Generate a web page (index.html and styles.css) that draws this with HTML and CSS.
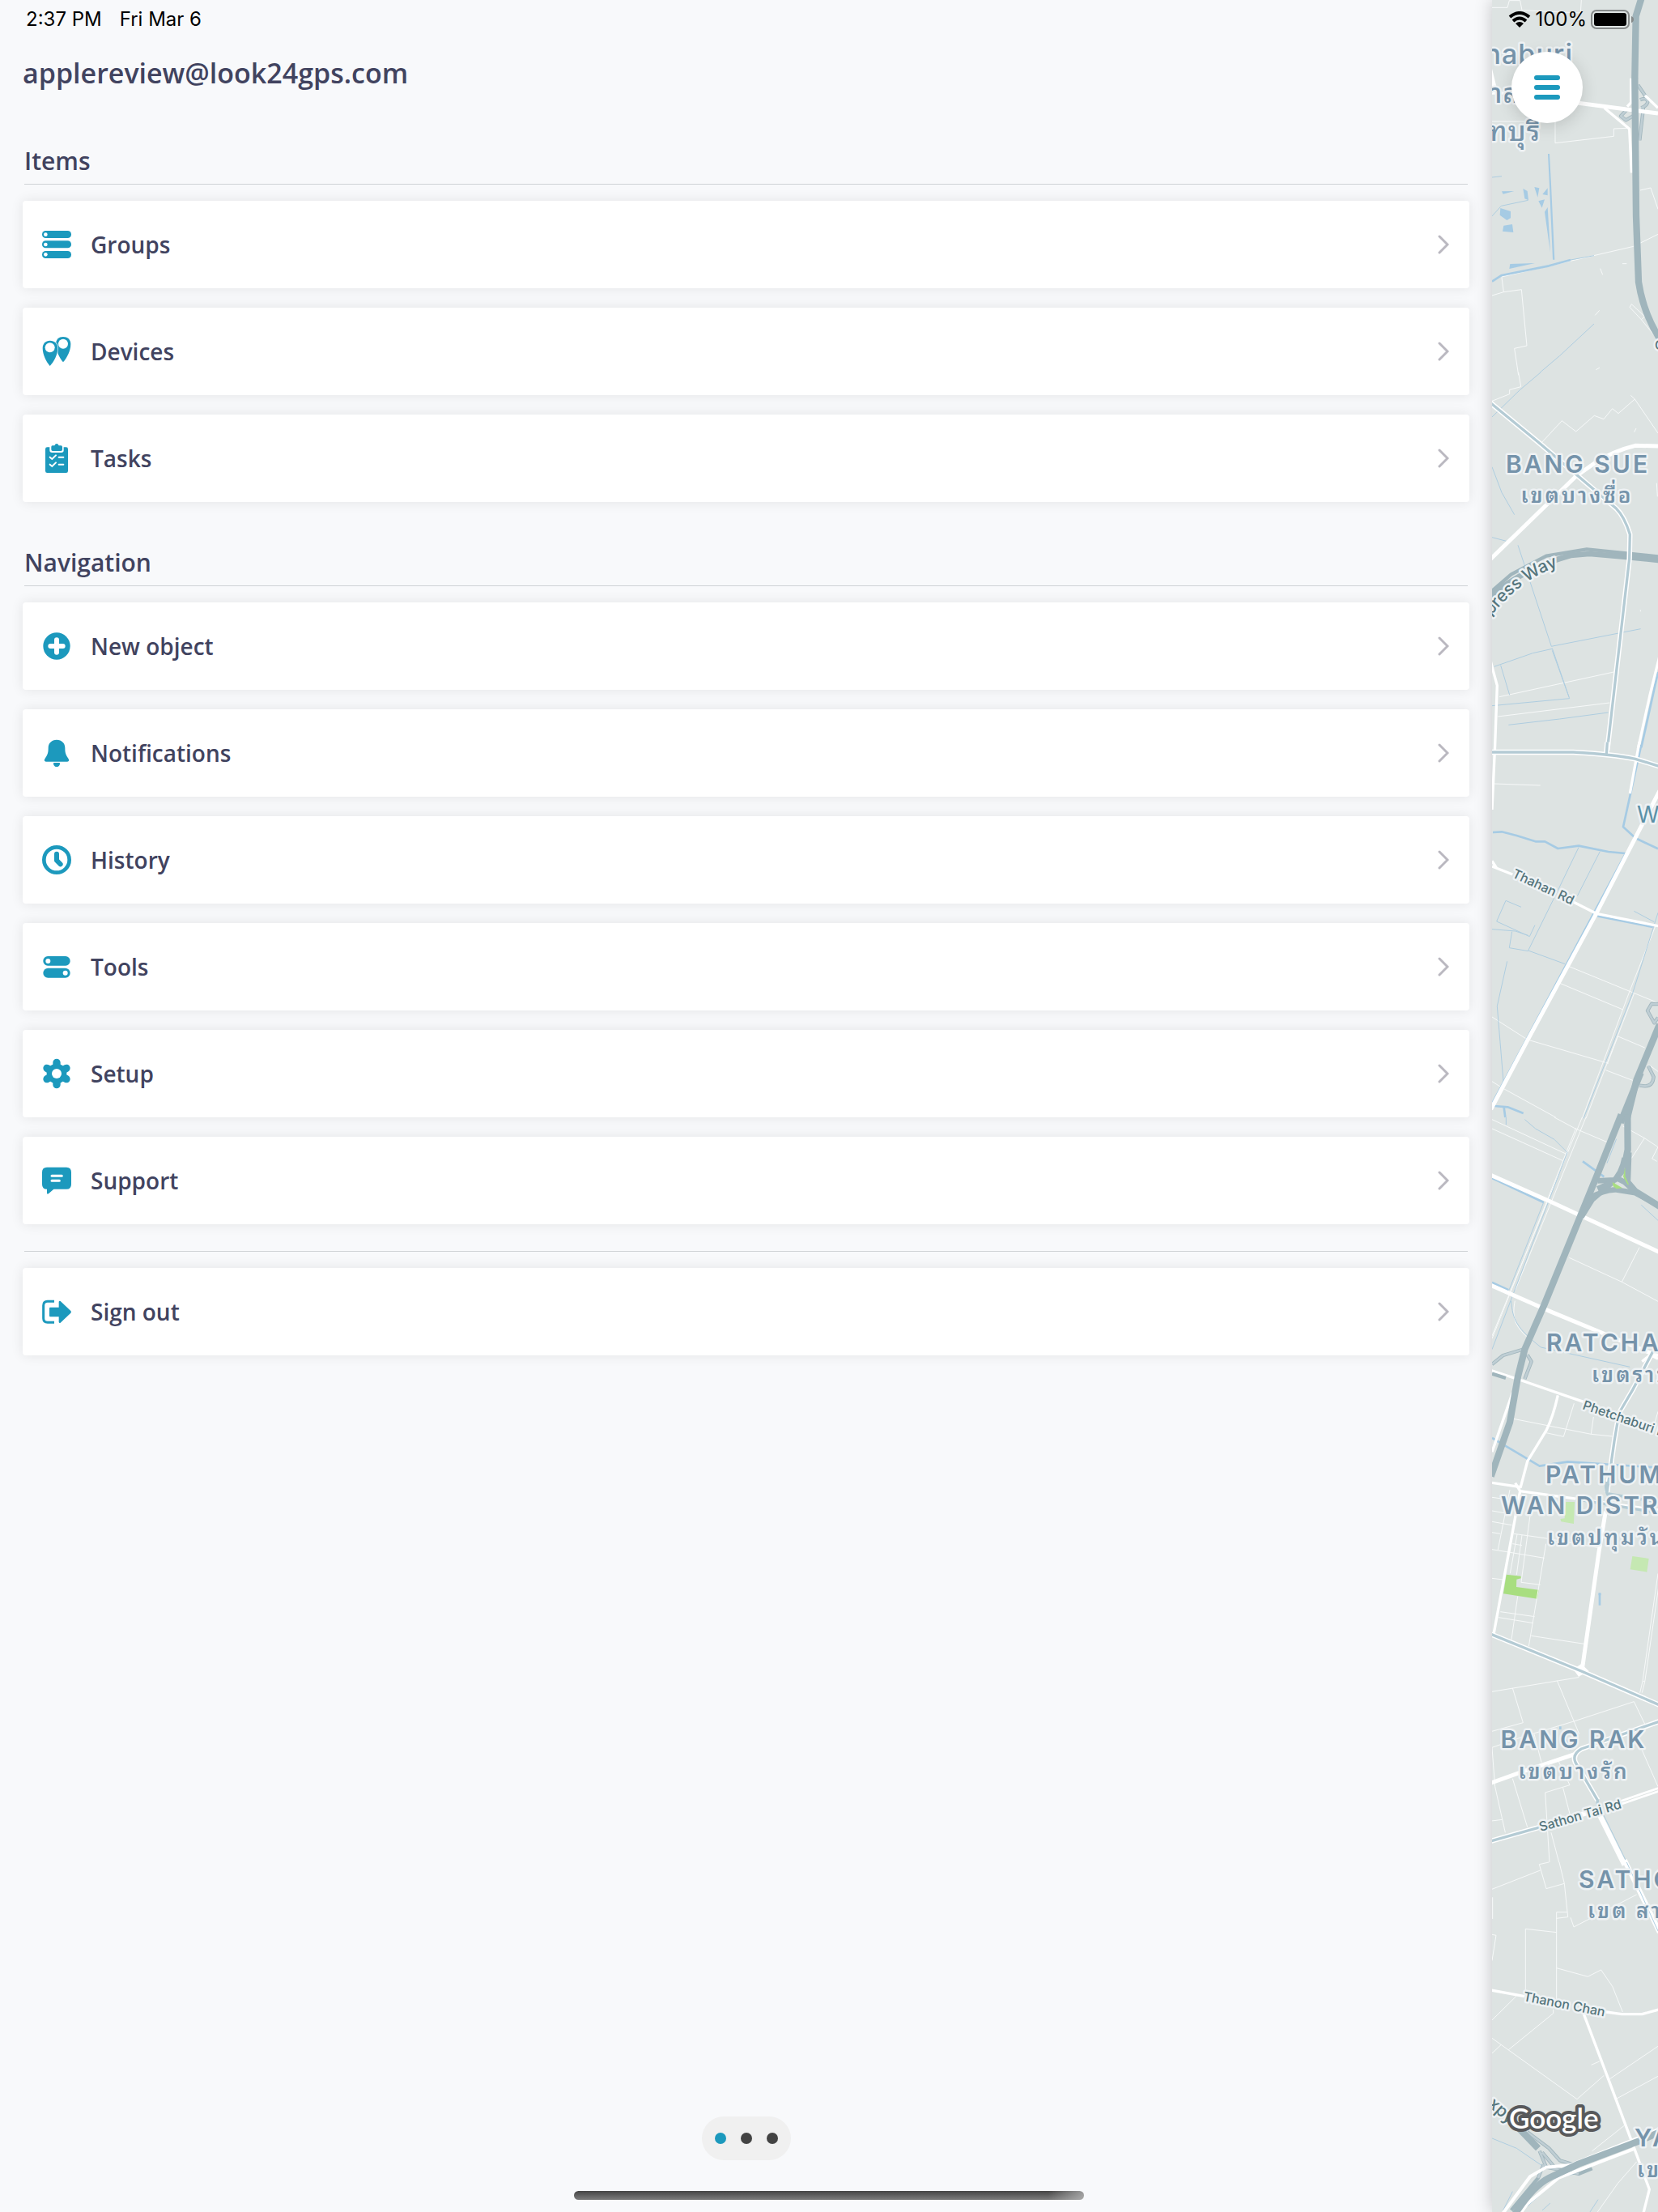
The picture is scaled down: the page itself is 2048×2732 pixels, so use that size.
FILE: index.html
```html
<!DOCTYPE html>
<html lang="en">
<head>
<meta charset="utf-8">
<meta name="viewport" content="width=device-width, initial-scale=1">
<title>Menu</title>
<link rel="stylesheet" href="styles.css">
</head>
<body>
<div class="screen">
  <main class="drawer">
    <div class="clock"><span>2:37 PM</span><span>Fri Mar 6</span></div>
    <h1 class="account">applereview@look24gps.com</h1>

    <section class="section">
      <h2 class="section-title">Items</h2>
      <nav class="list" aria-label="Items">
        <a class="row" href="#groups">
          <svg class="icon" viewBox="0 0 108 108" aria-hidden="true"><rect x="0" y="3" width="108" height="27" rx="13"/><rect x="0" y="40" width="108" height="27" rx="13"/><rect x="0" y="78" width="108" height="27" rx="13"/><g class="hole"><circle cx="13" cy="17" r="7"/><circle cx="13" cy="54" r="7"/><circle cx="13" cy="91" r="7"/></g></svg>
          <span class="label">Groups</span>
          <svg class="chevron" viewBox="0 0 14 24" aria-hidden="true"><path d="M2 2l10 10L2 22"/></svg>
        </a>
        <a class="row" href="#devices">
          <svg class="icon" viewBox="0 0 108 108" aria-hidden="true"><path d="M78 0C94 0 106 10 106 27C106 52 92 78 78 94C64 78 51 52 51 27C51 10 62 0 78 0Z"/><path class="pin-front" d="M29 14C46 14 58 25 58 42C58 66 44 92 29 108C15 92 2 66 2 42C2 25 13 14 29 14Z"/><g class="hole"><circle cx="29" cy="40" r="18"/><circle cx="78" cy="26" r="18"/></g></svg>
          <span class="label">Devices</span>
          <svg class="chevron" viewBox="0 0 14 24" aria-hidden="true"><path d="M2 2l10 10L2 22"/></svg>
        </a>
        <a class="row" href="#tasks">
          <svg class="icon" viewBox="0 0 108 108" aria-hidden="true"><path d="M19 13H28V25Q28 33 37 33H71Q80 33 80 25V13H89Q96 13 96 20V101Q96 108 89 108H19Q12 108 12 101V20Q12 13 19 13Z"/><path d="M38 7H46Q49 0 54 0Q59 0 62 7H70Q75 7 75 12V22Q75 27 70 27H39Q34 27 34 22V12Q34 7 38 7Z"/><path class="mark" d="M29 50L37 57L51 43M62 50H79M29 77L37 84L51 70M62 77H79"/></svg>
          <span class="label">Tasks</span>
          <svg class="chevron" viewBox="0 0 14 24" aria-hidden="true"><path d="M2 2l10 10L2 22"/></svg>
        </a>
      </nav>
    </section>

    <section class="section">
      <h2 class="section-title">Navigation</h2>
      <nav class="list" aria-label="Navigation">
        <a class="row" href="#new">
          <svg class="icon" viewBox="0 0 108 108" aria-hidden="true"><circle cx="54" cy="54" r="50"/><path class="plus" d="M54 31V77M31 54H77"/></svg>
          <span class="label">New object</span>
          <svg class="chevron" viewBox="0 0 14 24" aria-hidden="true"><path d="M2 2l10 10L2 22"/></svg>
        </a>
        <a class="row" href="#notifications">
          <svg class="icon" viewBox="0 0 108 108" aria-hidden="true"><path d="M54 5C73 5 85 18 85 35C85 56 89 61 97 74Q102 81 98 84Q97 86 93 86H15Q11 86 10 84Q6 81 11 74C19 61 23 56 23 35C23 18 35 5 54 5Z"/><path d="M44 90H64Q67 90 66 95Q63 105 54 105Q45 105 42 95Q41 90 44 90Z"/></svg>
          <span class="label">Notifications</span>
          <svg class="chevron" viewBox="0 0 14 24" aria-hidden="true"><path d="M2 2l10 10L2 22"/></svg>
        </a>
        <a class="row" href="#history">
          <svg class="icon" viewBox="0 0 108 108" aria-hidden="true"><circle class="ring" cx="54" cy="54" r="47"/><path class="hands" d="M54 32V56L68 70"/></svg>
          <span class="label">History</span>
          <svg class="chevron" viewBox="0 0 14 24" aria-hidden="true"><path d="M2 2l10 10L2 22"/></svg>
        </a>
        <a class="row" href="#tools">
          <svg class="icon" viewBox="0 0 108 108" aria-hidden="true"><rect x="4" y="15" width="100" height="35" rx="17"/><rect x="4" y="59" width="100" height="36" rx="18"/><g class="hole"><circle cx="22" cy="33" r="9"/><circle cx="86" cy="77" r="9"/></g></svg>
          <span class="label">Tools</span>
          <svg class="chevron" viewBox="0 0 14 24" aria-hidden="true"><path d="M2 2l10 10L2 22"/></svg>
        </a>
        <a class="row" href="#setup">
          <svg class="icon" viewBox="0 0 108 108" aria-hidden="true"><circle cx="54" cy="54" r="37"/><path class="teeth" d="M54 13V95M18 34L90 74M90 34L18 74"/><circle class="hole" cx="54" cy="54" r="18"/></svg>
          <span class="label">Setup</span>
          <svg class="chevron" viewBox="0 0 14 24" aria-hidden="true"><path d="M2 2l10 10L2 22"/></svg>
        </a>
        <a class="row" href="#support">
          <svg class="icon" viewBox="0 0 108 108" aria-hidden="true"><path d="M18 5H90Q108 5 108 23V68Q108 86 90 86H43L24 103Q18 107 18 100V86Q0 86 0 68V23Q0 5 18 5Z"/><path class="line" d="M36 37H73M36 55H64"/></svg>
          <span class="label">Support</span>
          <svg class="chevron" viewBox="0 0 14 24" aria-hidden="true"><path d="M2 2l10 10L2 22"/></svg>
        </a>
      </nav>
    </section>

    <div class="session">
      <a class="row" href="#signout">
        <svg class="icon" viewBox="0 0 108 108" aria-hidden="true"><path class="door" d="M45 16H20Q5 16 5 31V79Q5 94 20 94H45"/><path d="M30 38H62V17Q64 12 68 15L106 51Q110 55 106 59L68 95Q64 98 62 93V73H30Q27 73 27 69V42Q27 38 30 38Z"/></svg>
        <span class="label">Sign out</span>
        <svg class="chevron" viewBox="0 0 14 24" aria-hidden="true"><path d="M2 2l10 10L2 22"/></svg>
      </a>
    </div>

    <div class="pager" role="group" aria-label="Pages">
      <button class="dot dot-current" type="button" aria-label="Page 1"></button>
      <button class="dot" type="button" aria-label="Page 2"></button>
      <button class="dot" type="button" aria-label="Page 3"></button>
    </div>
  </main>

  <aside class="map">
    <svg class="map-canvas" viewBox="103 0 205 2732" preserveAspectRatio="xMinYMin slice">
      <g transform="scale(.33333)">
        <!-- Nonthaburi -->
        <g>
          <path class="lane" d="M309 28H366L373 2H413L420 38L637 48L640 0M309 450H543V530L760 505V477L808 475M345 1028L352 1082L418 1073L438 1281L392 1291L407 1390M309 1095L352 1082M345 1026L833 913L924 868M858 705L897 696L924 775M710 995L719 1018M792 977H808M707 1150L691 1168M819 1138L826 1127L875 1173L862 1184ZM862 1184L912 1245M694 1370L708 1362"/>
          <path class="road" d="M309 345H420"/>
          <path class="road-fill" d="M309 255L325 320H309Z"/>
          <path class="water-fill" d="M345 709L391 708L350 719ZM424 699L440 708L444 742L430 736ZM466 693L484 697L478 731ZM515 697V724L496 720ZM481 745L504 739L494 770ZM340 771L378 783V808L364 816L338 797ZM352 836L384 831L388 861L348 857ZM376 978L468 975L373 996ZM516 570H522L528 682L541 962H534L522 690ZM504 785L515 768L525 935Z"/>
          <path class="river" d="M309 1043L345 1020L520 985L600 963"/>
          <path class="stream" d="M309 657L345 653M309 801L343 763L443 742M600 963L687 947M487 1380L560 1318L687 1200"/>
          <path class="ramp-casing" d="M850 315L880 360M858 370Q880 360 886 375Q886 390 862 400M870 400L856 520M840 425L805 445L786 430L810 405L830 410"/>
          <path class="ramp" d="M850 315L880 360M858 370Q880 360 886 375Q886 390 862 400M870 400L856 520M840 425L805 445L786 430L810 405L830 410"/>
          <path class="road road-wide" d="M600 378L924 420"/>
          <path class="road" d="M824 290V380L810 395M725 400L818 478L826 640M876 354L924 400"/>
          <path class="highway" d="M862 -5L842 60L838 290L843 800L852 1045Q870 1160 930 1255"/>
        </g>
        <!-- Bang Sue -->
        <g transform="translate(0 1380)">
          <path class="lane" d="M407 0L416 53L374 64V80L309 106M490 263L568 179L620 219L688 160L723 173L755 134L777 152L838 99L823 85M838 99L924 225M919 410L922 460M336 1202L760 1110M331 1275L745 1224M843 207L836 221M859 880V886"/>
          <path class="stream" d="M489 0L412 65L309 165M309 350L345 445L392 527M309 611L362 625M405 640L529 1015L860 950M317 1090L460 1040L532 1024M341 1085L374 1195M532 1030L596 1208L309 1235M532 1022L594 1202M370 1306L560 1284L740 1260"/>
          <path class="road road-wide" d="M300 695L620 385L690 335Q760 290 840 271L924 273"/>
          <path class="ramp-casing" d="M309 810L380 748L510 680L660 655L924 682"/>
          <path class="highway highway-slim" d="M300 830Q420 735 560 690L600 678L670 672L790 682L930 696"/>
          <path class="road" d="M300 1055L313 1105L328 1160L320 1380"/>
          <path class="river" d="M924 1110L862 1390"/>
          <path class="road" d="M930 1050L893 1200L850 1395"/>
          <path class="trunk-casing" d="M300 110L480 258L770 505Q800 535 820 600L818 690L736 1400"/>
          <path class="trunk" d="M300 110L480 258L770 505Q800 535 820 600L818 690L736 1400"/>
        </g>
        <!-- Thahan Road -->
        <g transform="translate(0 2760)">
          <path class="lane" d="M316 144L488 150M592 820L924 956M560 883L792 980M309 1008L440 1092L740 1180M309 1247L345 1270L545 1380M776 1080L875 1122M730 1205L830 1243M890 1185L924 1210M915 670L818 915L643 1384M835 922L657 1384M776 1078L737 1180"/>
          <path class="stream" d="M630 380L555 535L443 762L580 812M709 395L625 560M417 601L360 577L326 654L448 710L468 668M309 683L395 690L443 706M383 692L373 752L443 764M365 802L328 968L353 1270M835 616L910 656M924 622L830 920L648 1384"/>
          <path class="river" d="M862 0L795 304L840 345L924 385M312 324L345 322L400 336L470 358L505 358L553 384L630 374L740 396L803 402M700 634L905 675M318 1338L367 1342L425 1365M353 1342L358 1380M803 405L309 1330"/>
          <path class="road" d="M320 0L309 240M855 -10L820 180M309 450L385 480M309 430L325 455M600 577L695 625L930 672"/>
          <path class="road road-wide" d="M930 170L695 625L440 1095L305 1350"/>
          <path class="trunk-casing" d="M736 -10L733 35M300 27H610Q760 35 840 52L930 80"/>
          <path class="trunk" d="M736 -10L733 35M300 27H610Q760 35 840 52L930 80"/>
          <path class="ramp-casing" d="M924 960H900L885 985L910 1030L924 1010M888 1190L908 1230Q905 1265 875 1264L855 1262"/>
          <path class="ramp" d="M924 960H900L885 985L910 1030L924 1010M888 1190L908 1230Q905 1265 875 1264L855 1262"/>
          <path class="highway" d="M930 1035L845 1240L808 1390"/>
          <path class="highway" d="M860 1215L785 1400"/>
        </g>
        <!-- Ratchathewi -->
        <g transform="translate(0 4140)">
          <path class="lane" d="M540 0L618 42L738 93M309 8L582 135M309 42L570 160M620 40L309 820M643 0L309 810M657 0L395 640M793 32L874 77L924 110M874 77L826 152M924 110L902 153L920 163M595 520L790 610L924 682M855 482L790 610M388 1117L676 1174L755 1182M613 1060L574 1183L505 1168M685 1110L676 1174M924 1090L910 1140M394 680C380 750 400 780 450 825"/>
          <path class="stream" d="M361 0V28M430 8L470 42L540 82L588 130L309 860M500 315L372 640M770 80L735 170M862 325L924 382M380 680C385 750 400 780 490 852L820 925"/>
          <path class="river" d="M645 163L724 220M309 225L500 315M309 612L370 640M309 1188L485 1292L590 1276L924 1298"/>
          <path class="road road-wide" d="M300 212L520 310L930 500M300 620L515 715L924 885"/>
          <path class="road" d="M300 936L410 972L650 1055M553 1030Q535 1110 510 1160L440 1275L415 1370L309 1354M385 1020L309 1240M865 905L895 880L924 895"/>
          <path class="ramp-casing" d="M309 915L350 882L430 858M440 880L455 905L430 970M309 950L360 966"/>
          <path class="ramp" d="M309 915L350 882L430 858M440 880L455 905L430 970"/>
          <path class="highway" d="M788 -10L700 210L645 345L500 700L430 860L405 960L375 1130L305 1330"/>
          <path class="highway" d="M811 -10L812 120L800 180M814 130L810 240L840 275L930 330"/>
          <path class="highway highway-slim" d="M800 150Q790 210 750 245L680 305L640 370M700 235L765 232L800 190M670 300Q720 270 765 268L840 280L924 325"/>
          <path class="highway highway-slim" d="M765 222L800 240L850 285M745 245L700 265"/>
          <path class="park" d="M755 240L792 262L770 265L758 256ZM802 185L795 220L812 250L816 248L803 220Z"/>
          <path class="trunk-casing" d="M905 868L830 1010L780 1095L762 1200L735 1390"/>
          <path class="trunk" d="M905 868L830 1010L780 1095L762 1200L735 1390"/>
        </g>
        <!-- Pathum Wan and Bang Rak -->
        <g transform="translate(0 5520)">
          <path class="park-light" d="M582 45H615L612 126L565 118L562 108L578 106ZM829 246L890 255L883 305L821 295Z"/>
          <path class="park" d="M362 314L416 320V328L400 332L399 360L482 371L477 404L351 385Z"/>
          <path class="lane" d="M309 28L345 33M309 118L382 131M309 78L355 86M309 158L340 163M375 0L331 222M309 221L503 253M452 80L417 343L488 352M390 163L510 180L700 214M509 200L445 580M402 165L376 310M420 168L400 315M385 200L420 206M309 328L350 333M404 395L381 555M340 452L467 470M333 473L462 494M454 541L650 571M924 310L867 710L857 752M932 320L875 712L865 752M867 710H876M309 748L630 695L635 680M385 735L424 863L309 895M550 707L632 905M309 955L424 915L612 858L835 785L875 868M309 955L320 1100L358 1270M385 1070L440 1250M465 905L492 1010M555 1005L597 1094L506 1122L522 1380M572 1105L597 1200M309 1227L347 1222M865 965L924 1100M528 1270L557 1380"/>
          <path class="road" d="M395 -25L413 5L924 75M413 5L316 530"/>
          <path class="road road-wide" d="M730 80L705 230L643 665"/>
          <path class="road-fill" d="M610 665L640 645L668 672L630 692Z"/>
          <path class="trunk" d="M620 35L924 85M740 15L924 45"/>
          <path class="river" d="M703 387H713M708 382V428M562 877V888M575 910L600 965"/>
          <path class="trunk-casing" d="M300 533L640 672L930 798"/>
          <path class="trunk" d="M300 533L640 672L930 798M733 -30Q725 15 750 30"/>
          <path class="road road-wide" d="M300 1088L420 1045L615 980"/>
          <path class="trunk-casing" d="M930 858L640 960Q605 980 618 1010L700 1150M300 1303L480 1252L700 1185M700 1190L800 1390"/>
          <path class="trunk" d="M930 858L640 960Q605 980 618 1010L700 1150V1190M300 1303L480 1252L640 1205"/>
          <path class="trunk-casing" d="M775 1163L930 1110"/>
          <path class="seam" d="M775 1163L930 1110"/>
          <path class="stream" d="M720 1200L808 1380"/>
        </g>
        <!-- Sathon and Yan Nawa -->
        <g transform="translate(0 6900)">
          <path class="lane" d="M309 100L488 30M484 8L510 98L577 79L558 0M484 8L520 0M577 79L590 203L548 208M548 185H588M600 205L612 240L845 120M433 475V247L548 260M548 185V510M548 392L664 424L713 399L755 460L793 555M309 268L324 271L309 365M311 130V210M309 585L400 495M370 695L536 560V545M309 652L624 878L724 790M309 708L342 677M677 751L707 738M745 803L924 682M771 876L924 793M680 1070L800 975M700 1296L775 1190L845 1110"/>
          <path class="stream" d="M309 1023L400 1060L495 1125M440 1275L560 1165L620 1155M495 1290L525 1263M672 1296L702 1250M385 1220L350 1290"/>
          <path class="road" d="M300 473L430 497M710 552L790 563H865L930 545M648 560L735 790L825 1030L892 1212L870 1300"/>
          <path class="trunk-casing" d="M800 -8L930 260"/>
          <path class="stream" d="M808 0L924 255"/>
          <path class="ramp-casing" d="M440 1000L520 1060L560 1105L610 1120M485 1070L510 1130L560 1140L630 1155L680 1135M500 1120L480 1170L380 1290M495 1075L545 1135"/>
          <path class="ramp" d="M440 1000L520 1060L560 1105L610 1120M485 1070L510 1130L560 1140L630 1155M500 1120L480 1170M495 1075L545 1135"/>
          <path class="ramp" d="M300 875L365 945"/>
          <path class="highway" d="M350 925L480 1060"/>
          <path class="highway-casing" d="M350 1300L450 1165L510 1130L600 1122L850 1022L924 990M415 1300L440 1265L555 1170L840 1060"/>
          <path class="highway" d="M390 1310Q460 1200 520 1170L630 1118L850 1035L930 1000"/>
        </g>
      </g>
      <path id="expressway" class="guide" d="M92 768L109 753Q143 712 194 696"/>
      <g class="place">
        <text class="city" x="203" y="79" text-anchor="end">haburi</text>
        <text class="city" x="101" y="127">าล</text>
        <text class="city" x="163" y="174" text-anchor="end">ทบุรี</text>
        <text x="209" y="584" text-anchor="middle">BANG SUE</text>
        <text class="thai" x="208" y="621" text-anchor="middle">เขตบางซื่อ</text>
        <text x="170" y="1669">RATCHA</text>
        <text class="thai" x="226" y="1707">เขตราช</text>
        <text x="169" y="1832">PATHUM</text>
        <text x="114" y="1870">WAN DISTR</text>
        <text class="thai" x="171" y="1908">เขตปทุมวัน</text>
        <text x="204" y="2159" text-anchor="middle">BANG RAK</text>
        <text class="thai" x="204" y="2197" text-anchor="middle">เขตบางรัก</text>
        <text x="210" y="2332">SATHO</text>
        <text class="thai" x="221" y="2369">เขต สา</text>
        <text x="279" y="2651">YA</text>
        <text class="thai" x="282" y="2689">เข</text>
      </g>
      <text class="poi" x="282" y="1016">Wo</text>
      <g class="street">
        <text class="street-large"><textPath href="#expressway">xpress Way</textPath></text>
        <text x="304" y="432">C</text>
        <text transform="translate(127 1083) rotate(25)">Thahan Rd</text>
        <text transform="translate(214 1740) rotate(19)">Phetchaburi R</text>
        <text transform="translate(163 2262) rotate(-16)">Sathon Tai Rd</text>
        <text transform="translate(141 2471) rotate(11)">Thanon Chan</text>
        <text class="street-large" transform="translate(97 2600) rotate(42)">xpy</text>
      </g>
      <text class="brand" x="124" y="2629">Google</text>
    </svg>

    <div class="device-status">
      <svg class="wifi" viewBox="0 0 28 20" aria-hidden="true"><path class="wave" d="M2 7Q14 -3 26 7M6 12Q14 5 22 12"/><path d="M9 15Q14 11 19 15L14 20Z"/></svg>
      <span>100%</span>
      <svg class="battery" viewBox="0 0 54 24" aria-hidden="true"><rect class="shell" x="1" y="1" width="46" height="22" rx="6"/><rect x="4" y="4" width="40" height="16" rx="3"/><path class="nub" d="M50 8Q53 9 53 12Q53 15 50 16Z"/></svg>
    </div>
    <button class="menu" type="button" aria-label="Menu">
      <svg class="menu-icon" viewBox="0 0 32 30" aria-hidden="true"><path d="M3 3H29M3 15H29M3 27H29"/></svg>
    </button>
  </aside>
  <div class="home-indicator"></div>
</div>
</body>
</html>
```

FILE: styles.css
```css
:root {
  --accent: #1c99bd;
  --ink: #41435f;
  --surface: #f8f9fb;
}

* {
  box-sizing: border-box;
}

body {
  margin: 0;
  background: var(--surface);
  color: var(--ink);
  font-family: "Open Sans", "Noto Sans", sans-serif;
  font-weight: 600;
}

.screen {
  position: relative;
  display: grid;
  grid-template-columns: 9fr 1fr;
  min-height: 100vh;
  overflow: hidden;
}

.drawer {
  display: flex;
  flex-direction: column;
  min-width: 0;
  padding: 8px 28px 64px;
}

.clock {
  display: flex;
  gap: 22px;
  padding-left: 4px;
  color: #000;
  font-family: Inter, "Liberation Sans", sans-serif;
  font-size: 24px;
  line-height: 32px;
  font-weight: 400;
}

.account {
  margin: 25px 0 63px;
  font-size: 34px;
  line-height: 50px;
  font-weight: 600;
}

.section {
  padding-bottom: 54px;
}

.section + .section {
  padding-bottom: 33px;
}

.section-title {
  margin: 0 2px 20px;
  padding-bottom: 7px;
  border-bottom: 1px solid #cfd2d6;
  font-size: 30px;
  line-height: 42px;
  font-weight: 600;
}

.list {
  display: flex;
  flex-direction: column;
  gap: 24px;
}

.row {
  display: flex;
  align-items: center;
  gap: 24px;
  height: 108px;
  padding: 0 25px 0 24px;
  border-radius: 4px;
  background: #fff;
  box-shadow: 0 0 16px rgba(0, 0, 0, .09);
  color: inherit;
  font-size: 28px;
  line-height: 40px;
  text-decoration: none;
}

.label {
  flex: 1;
}

.icon {
  width: 36px;
  height: 36px;
  overflow: visible;
  fill: var(--accent);
}

.hole {
  fill: #fff;
}

.pin-front {
  stroke: #fff;
  stroke-width: 4;
  paint-order: stroke;
}

.mark,
.plus,
.line {
  fill: none;
  stroke: #fff;
  stroke-linecap: round;
}

.mark {
  stroke-width: 6;
}

.plus {
  stroke-width: 18;
}

.line {
  stroke-width: 9;
}

.ring,
.hands,
.door {
  fill: none;
  stroke: var(--accent);
  stroke-linecap: round;
  stroke-linejoin: round;
}

.ring {
  stroke-width: 14;
}

.hands {
  stroke-width: 18;
}

.door {
  stroke-width: 9;
  stroke-linecap: butt;
}

.teeth {
  stroke: var(--accent);
  stroke-width: 28;
  stroke-linecap: round;
}

.chevron {
  width: 14px;
  height: 24px;
  fill: none;
  stroke: #bab8c0;
  stroke-width: 3;
  stroke-linecap: round;
}

.session::before {
  content: "";
  display: block;
  margin: 0 2px 20px;
  border-top: 1px solid #cfd2d6;
}

.pager {
  display: flex;
  align-self: center;
  gap: 18px;
  margin-top: auto;
  padding: 20px 16px;
  border-radius: 27px;
  background: #f0f0f0;
}

.dot {
  width: 14px;
  height: 14px;
  padding: 0;
  border: 0;
  border-radius: 50%;
  background: #434343;
}

.dot-current {
  background: var(--accent);
}

.map {
  position: relative;
  background: #dde3e2;
  box-shadow: 0 0 20px rgba(0, 0, 0, .22);
}

.map-canvas {
  position: absolute;
  inset: 0;
  width: 100%;
  height: 100%;
}

.map-canvas path {
  fill: none;
  stroke-linejoin: round;
}

.map-canvas .lane {
  stroke: #f7f9f9;
  stroke-width: 3;
}

.map-canvas .road {
  stroke: #fff;
  stroke-width: 10;
}

.map-canvas .road-wide {
  stroke-width: 15;
}

.map-canvas .road-fill {
  fill: #fff;
}

.map-canvas .seam {
  stroke: #dde3e2;
  stroke-width: 3;
}

.map-canvas .stream {
  stroke: #aecde0;
  stroke-width: 3;
}

.map-canvas .river {
  stroke: #a6cbe4;
  stroke-width: 8;
}

.map-canvas .water-fill {
  fill: #a6cbe4;
}

.map-canvas .trunk-casing {
  stroke: #fff;
  stroke-width: 19;
}

.map-canvas .trunk {
  stroke: #b4cbd4;
  stroke-width: 10;
}

.map-canvas .ramp-casing {
  stroke: #a0b5bc;
  stroke-width: 13;
}

.map-canvas .ramp {
  stroke: #bfced4;
  stroke-width: 8;
}

.map-canvas .highway {
  stroke: #a0b5bc;
  stroke-width: 25;
}

.map-canvas .highway-slim {
  stroke-width: 20;
}

.map-canvas .highway-casing {
  stroke: #fff;
  stroke-width: 12;
}

.map-canvas .park {
  fill: #a8de80;
}

.map-canvas .park-light {
  fill: #c5e8b2;
}

.map-canvas text {
  paint-order: stroke;
  stroke: #eef2f4;
  stroke-linejoin: round;
  stroke-width: 5px;
  font-family: Inter, "Noto Sans Thai Looped", Loma, Waree, "Noto Sans Thai", "Noto Sans", sans-serif;
}

.place {
  fill: #7593aa;
  font-size: 30px;
  font-weight: 600;
  letter-spacing: 3px;
}

.place .thai {
  font-size: 26px;
}

.place .city {
  font-size: 34px;
  font-weight: 500;
  letter-spacing: 1px;
}

.poi {
  fill: #5b91a8;
  font-size: 28px;
  font-weight: 400;
}

.street {
  fill: #55757c;
  font-size: 16px;
  font-weight: 500;
}

.street-large {
  font-size: 21px;
}

.map-canvas .brand {
  fill: #fff;
  stroke: #58595b;
  stroke-width: 8px;
  font-family: Lato, sans-serif;
  font-size: 35px;
  font-weight: 600;
}

.device-status {
  position: absolute;
  top: 8px;
  right: 29px;
  display: flex;
  align-items: center;
  gap: 5px;
  color: #000;
  font-family: Inter, "Liberation Sans", sans-serif;
  font-size: 24px;
  line-height: 32px;
  font-weight: 400;
}

.wifi {
  width: 28px;
  height: 20px;
}

.wave {
  fill: none;
  stroke: #000;
  stroke-width: 4;
}

.battery {
  width: 54px;
  height: 24px;
}

.shell {
  fill: none;
  stroke: #868a8a;
  stroke-width: 2;
}

.nub {
  fill: #868a8a;
}

.menu {
  position: absolute;
  top: 64px;
  left: 24px;
  display: grid;
  place-items: center;
  width: 88px;
  height: 88px;
  padding: 0;
  border: 0;
  border-radius: 50%;
  background: #fff;
  box-shadow: 0 4px 20px rgba(0, 0, 0, .15);
}

.menu-icon {
  width: 32px;
  height: 30px;
  fill: none;
  stroke: var(--accent);
  stroke-width: 6;
  stroke-linecap: round;
}

.home-indicator {
  position: absolute;
  bottom: 15px;
  left: 50%;
  width: 630px;
  height: 11px;
  border-radius: 6px;
  background: linear-gradient(to right, transparent 93%, rgba(190, 190, 190, .7)), linear-gradient(#444, #7c7c7c);
  transform: translateX(-50%);
}
```
